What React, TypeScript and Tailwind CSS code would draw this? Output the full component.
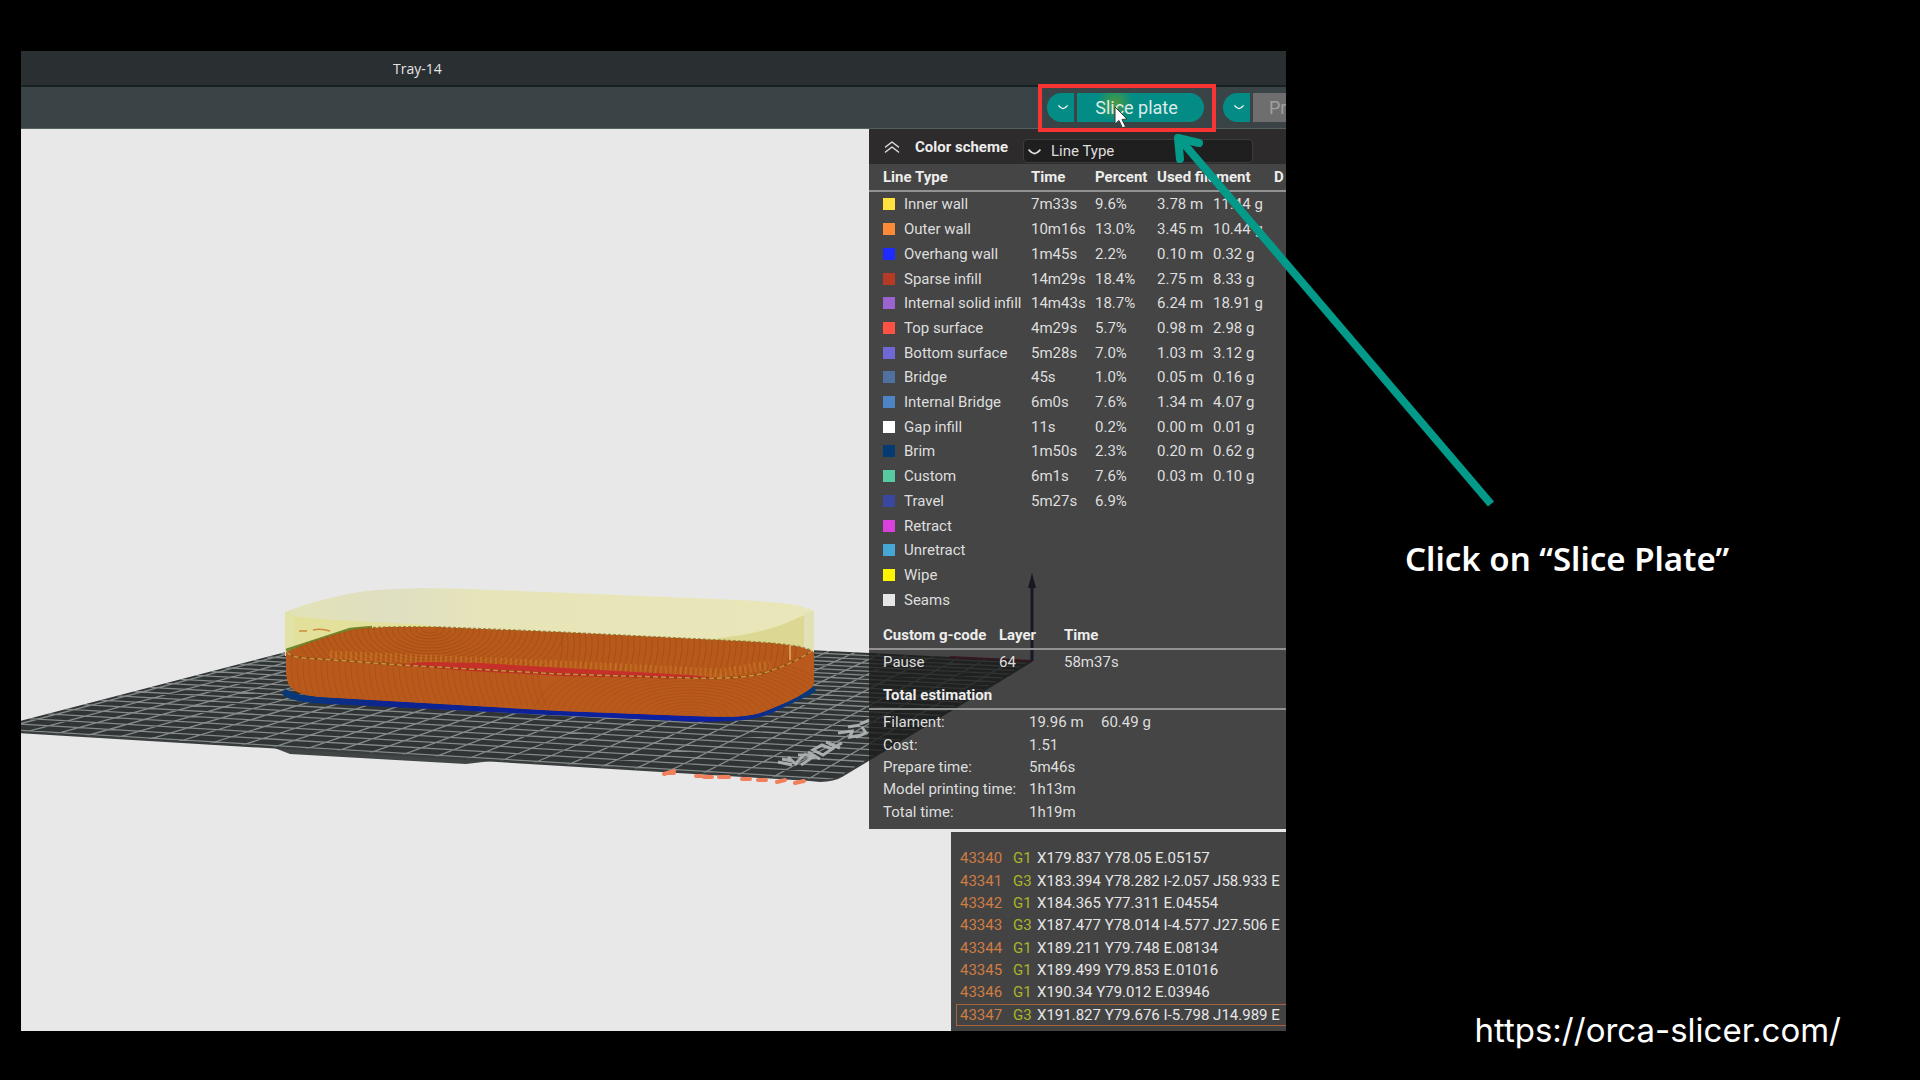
import React from "react";

type LineRow = [color: string, name: string, time?: string, percent?: string, meters?: string, grams?: string];

const lineTypes: LineRow[] = [
  ["#fee23e", "Inner wall", "7m33s", "9.6%", "3.78 m", "11.44 g"],
  ["#fc8a36", "Outer wall", "10m16s", "13.0%", "3.45 m", "10.44 g"],
  ["#1d2bff", "Overhang wall", "1m45s", "2.2%", "0.10 m", "0.32 g"],
  ["#b63a26", "Sparse infill", "14m29s", "18.4%", "2.75 m", "8.33 g"],
  ["#9a63d0", "Internal solid infill", "14m43s", "18.7%", "6.24 m", "18.91 g"],
  ["#ff5242", "Top surface", "4m29s", "5.7%", "0.98 m", "2.98 g"],
  ["#7068d4", "Bottom surface", "5m28s", "7.0%", "1.03 m", "3.12 g"],
  ["#5070a0", "Bridge", "45s", "1.0%", "0.05 m", "0.16 g"],
  ["#4c84c6", "Internal Bridge", "6m0s", "7.6%", "1.34 m", "4.07 g"],
  ["#ffffff", "Gap infill", "11s", "0.2%", "0.00 m", "0.01 g"],
  ["#053a72", "Brim", "1m50s", "2.3%", "0.20 m", "0.62 g"],
  ["#58caa0", "Custom", "6m1s", "7.6%", "0.03 m", "0.10 g"],
  ["#3a479e", "Travel", "5m27s", "6.9%"],
  ["#d940dc", "Retract"],
  ["#46a6d6", "Unretract"],
  ["#fdf500", "Wipe"],
  ["#e6e6e6", "Seams"],
];

const totals: [string, string, string?][] = [
  ["Filament:", "19.96 m", "60.49 g"],
  ["Cost:", "1.51"],
  ["Prepare time:", "5m46s"],
  ["Model printing time:", "1h13m"],
  ["Total time:", "1h19m"],
];

const gcode: [string, string, string][] = [
  ["43340", "G1", "X179.837 Y78.05 E.05157"],
  ["43341", "G3", "X183.394 Y78.282 I-2.057 J58.933 E"],
  ["43342", "G1", "X184.365 Y77.311 E.04554"],
  ["43343", "G3", "X187.477 Y78.014 I-4.577 J27.506 E"],
  ["43344", "G1", "X189.211 Y79.748 E.08134"],
  ["43345", "G1", "X189.499 Y79.853 E.01016"],
  ["43346", "G1", "X190.34 Y79.012 E.03946"],
  ["43347", "G3", "X191.827 Y79.676 I-5.798 J14.989 E"],
];

type Pt = [number, number];
const bed: Pt[] = [[-15, 730], [832, 781], [1032, 661], [375, 629]];

// Maps a point of the unit square onto the bed's perspective quad.
function project(u: number, v: number): string {
  const [p0, p1, p2, p3] = bed;
  const dx1 = p1[0] - p2[0], dx2 = p3[0] - p2[0], dx3 = p0[0] - p1[0] + p2[0] - p3[0];
  const dy1 = p1[1] - p2[1], dy2 = p3[1] - p2[1], dy3 = p0[1] - p1[1] + p2[1] - p3[1];
  const det = dx1 * dy2 - dx2 * dy1;
  const g = (dx3 * dy2 - dx2 * dy3) / det;
  const h = (dx1 * dy3 - dx3 * dy1) / det;
  const w = g * u + h * v + 1;
  const x = ((p1[0] - p0[0] + g * p1[0]) * u + (p3[0] - p0[0] + h * p3[0]) * v + p0[0]) / w;
  const y = ((p1[1] - p0[1] + g * p1[1]) * u + (p3[1] - p0[1] + h * p3[1]) * v + p0[1]) / w;
  return `${x.toFixed(1)} ${y.toFixed(1)}`;
}

const steps = Array.from({ length: 26 }, (_, i) => (i + 0.3) / 26);
const gridPath = steps
  .map((t) => `M${project(t, 0)}L${project(t, 1)}M${project(0, t)}L${project(1, t)}`)
  .join("");

const trayBody =
  "M286 652 C300 645 340 632 355 629 C380 626 420 627 440 627 L560 632 L740 641 C780 643 805 646 814 652 L814 684 C812 692 775 708 760 713 C745 718 715 717 690 716 L560 711 L320 697 C298 695 286 690 286 672 Z";
const trayRim =
  "M287 652 C290 657 300 658 320 659 L400 665 L560 674 L690 678 C730 679 755 677 770 671 C785 666 800 659 812 651";

function Scene() {
  return (
    <svg className="absolute inset-0 size-full" viewBox="21 129 1265 902" preserveAspectRatio="xMinYMin slice" aria-hidden="true">
      <defs>
        <clipPath id="bedClip">
          <path d="M-15 730 L375 629 L1032 661 L842 776 Q834 781 820 781 L810 780 Z" />
        </clipPath>
        <clipPath id="trayClip">
          <path d={trayBody} />
        </clipPath>
        <clipPath id="faceClip">
          <path d={`${trayRim} L814 652 L814 720 L286 720 Z`} />
        </clipPath>
        <linearGradient id="shellFill" x1="0" x2="1">
          <stop offset="0" stopColor="#e3e2b6" />
          <stop offset="0.2" stopColor="#dfdfc2" />
          <stop offset="0.4" stopColor="#e7e5b8" />
          <stop offset="1" stopColor="#e9e7ba" />
        </linearGradient>
        <linearGradient id="brimFill" x1="0" x2="1">
          <stop offset="0" stopColor="#093a78" />
          <stop offset="0.2" stopColor="#0d2390" />
          <stop offset="0.8" stopColor="#0d1fa2" />
          <stop offset="1" stopColor="#093a78" />
        </linearGradient>
      </defs>

      <path d="M272 747 L290 754 L466 764 L500 760 Z" fill="#414545" />
      <g clipPath="url(#bedClip)">
        <path d="M-20 600 H1040 V800 H-20 Z" fill="#303434" />
        <path d={gridPath} stroke="#858b8a" strokeWidth="1.3" fill="none" />
        <g fill="none" stroke="#b4b8b8" strokeWidth="3" opacity="0.9">
          <path d="M778 762 l14 3 M782 759 l10 2 M788 757 l9 8 M796 763 l8 -8 l-6 0 M801 765 l12 -8 M804 754 l11 4" />
          <path d="M808 752 l12 7 M813 750 l10 5 l9 -6 l-10 -4 z M826 742 l14 6 M832 748 l10 -5" />
          <path d="M838 733 l14 -2 l-2 6 l12 -2 M848 727 l12 -2 M856 737 l10 -4 l-4 -6 M860 724 l10 -4" />
        </g>
      </g>
      <path d="M-15 730 L810 780 L820 781 Q834 781 842 776 L1032 661" stroke="#3a3e3e" strokeWidth="2" fill="none" />
      <path d="M664 774l10 -3M669 773h5M696 776h5M704 777h8M719 777h10M742 779h8M758 780h8M777 782l8 -2M795 783l9 -2" stroke="#f0805c" strokeWidth="4" strokeLinecap="round" />

      <path d="M1032 661 L950 657" stroke="#a00030" strokeWidth="2" />
      <path d="M1032 661 V584" stroke="#120a58" strokeWidth="3" />
      <path d="M1032 573 L1036 588 H1028 Z" fill="#0a0640" />

      <path d="M285 612 C310 602 345 593 375 590 C410 588 440 588 470 589 L740 600 C785 602 808 606 814 612 V656 H285 Z" fill="url(#shellFill)" />
      <path d="M294 616 C330 622 420 622 440 627 L350 640 L286 652 V612 Z" fill="#e3e09c" />
      <path d="M285 612 L294 615 V650 L285 652 Z" fill="#e0e2a6" />
      <path d="M814 612 C795 617 780 630 735 636 L705 640 L814 652 Z" fill="#dcd894" />
      <path d="M804 613 L814 611 V652 H804 Z" fill="#e2e1b6" />
      <path d="M299 631h8M313 630q8 -2 17 1" stroke="#d08a3c" strokeWidth="1.5" fill="none" />
      <path d="M286 650 L350 629 L372 627" stroke="#6f8a2c" strokeWidth="2.5" fill="none" />

      <path d="M286 693 C296 700 320 700 340 701 L560 712 L690 718 C730 719 752 717 768 711 L812 690" stroke="url(#brimFill)" strokeWidth="7" strokeLinecap="round" fill="none" />

      <g clipPath="url(#trayClip)">
        <path d={trayBody} fill="#b85a1d" />
        <g fill="none" stroke="#8f420f" strokeWidth="1" opacity="0.45">
          {Array.from({ length: 22 }, (_, i) => (
            <ellipse key={i} cx="430" cy="629" rx={8 + i * 6} ry={4 + i * 3} />
          ))}
          {Array.from({ length: 40 }, (_, i) => (
            <path key={i} d={`M${560 + i * 6} 628 q6 20 -4 46`} />
          ))}
        </g>
        <path d="M330 655 L400 658 L560 665 L720 673 L770 665" stroke="#d0892c" strokeWidth="9" strokeDasharray="2 3" fill="none" opacity="0.45" />
        <path d="M396 665 L425 662 L480 663 L600 670 L690 675 L718 678 L690 679 L560 675 L470 670 Z" fill="#c6302a" />
        <g clipPath="url(#faceClip)">
          <path d={`${trayRim} L814 720 H286 Z`} fill="#bb5a1d" />
          <g fill="none" stroke="#96460f" strokeWidth="1" opacity="0.35">
            {Array.from({ length: 22 }, (_, i) => (
              <ellipse key={i} cx="690" cy="717" rx={10 + i * 7} ry={3 + i * 3} />
            ))}
            {Array.from({ length: 42 }, (_, i) => (
              <path key={i} d={`M${292 + i * 6} 656 q-4 20 8 50`} />
            ))}
          </g>
        </g>
        <path d="M396 665 L425 663 L480 665 L600 673 L700 677 L690 679 L560 676 L470 671 Z" fill="#c6302a" />
        <path d={trayRim} stroke="#6d4212" strokeWidth="2" fill="none" opacity="0.5" />
        <path d={trayRim} stroke="#d9a446" strokeWidth="1.5" strokeDasharray="5 3" fill="none" opacity="0.8" />
      </g>
      <path d="M287 652 C300 645 340 632 355 629 C380 626 420 627 440 627 L560 632 L740 641 C780 643 805 646 812 651" stroke="#8a6a20" strokeWidth="1.5" strokeDasharray="3 2" fill="none" opacity="0.7" />
      <path d="M790 644 V660" stroke="#e0b070" strokeWidth="1.5" />
    </svg>
  );
}

function Chevron({ className }: { className: string }) {
  return (
    <svg className={className} viewBox="0 0 12 6" fill="none" stroke="currentColor" strokeWidth="1.6" strokeLinecap="round" strokeLinejoin="round" aria-hidden="true">
      <path d="M1 1 Q3.5 4 6 4.3 Q8.5 4 11 1" />
    </svg>
  );
}

function Toolbar() {
  return (
    <div className="relative z-10 flex h-[42px] items-center justify-end border-b border-[#566063] bg-[#3a4446]">
      <div className="relative flex h-[29px] gap-[3px]">
        <button aria-label="Slice options" className="flex w-[27px] items-center justify-center rounded-l-full bg-[#038c85] pl-1 text-white">
          <Chevron className="w-[10px]" />
        </button>
        <button className="w-[127px] rounded-r-full bg-[#038c85] bg-[radial-gradient(circle_at_38px_10px,#4f9a3c_0,#038c85_18px)] pr-2 text-center text-[18px] text-[#dcebe9]">
          Slice plate
        </button>
        <span className="absolute -top-[9px] -right-[12px] -bottom-[10px] -left-[9px] border-4 border-[#f83434]" />
        <svg className="absolute top-[13px] left-[66px] h-[24px] w-[16px]" viewBox="0 0 16 24" aria-hidden="true">
          <path d="M2 1 L2 18 L6 14.5 L9.5 22 L12.5 20.5 L9 13.500 L14 13 Z" fill="#fff" stroke="#333b3b" strokeWidth="1" />
        </svg>
      </div>
      <div className="ml-[19px] flex h-[29px] w-[63px] gap-[3px]">
        <button aria-label="Print options" className="flex w-[27px] shrink-0 items-center justify-center rounded-l-full bg-[#038c85] pl-1 text-white">
          <Chevron className="w-[10px]" />
        </button>
        <button className="grow bg-[#6e6e6e] pl-[16px] text-left text-[18px] text-[#a0a0a0]">Pr</button>
      </div>
    </div>
  );
}

function PreviewPanel() {
  return (
    <section className="relative ml-auto w-[417px] overflow-hidden bg-[#1b1b1b]/80 pb-[6px] text-[15px] leading-5 text-[#dedede]">
      <div className="flex h-[35px] items-center bg-[#2d2b2c] pl-[15px]">
        <button aria-label="Collapse" className="mr-[15px] text-[#dedede]">
          <svg className="size-4" viewBox="0 0 16 16" fill="none" stroke="currentColor" strokeWidth="1.5" strokeLinecap="round" strokeLinejoin="round">
            <path d="M1.500 8 L8 3 L14.500 8 M1.500 13 L8 8 L14.500 13" />
          </svg>
        </button>
        <label htmlFor="scheme" className="w-[108px] shrink-0 font-bold text-[#ededed]">
          Color scheme
        </label>
        <div className="relative mt-2 w-[230px]">
          <select id="scheme" className="h-[24px] w-full appearance-none rounded-sm border border-[#3d3b3c] bg-[#201f20] pl-[27px] text-[15px] leading-5 text-[#dedede]">
            <option>Line Type</option>
          </select>
          <Chevron className="pointer-events-none absolute top-[10px] left-[5px] w-[13px]" />
        </div>
      </div>

      <table className="h-[448px] w-full table-fixed border-collapse text-left">
        <colgroup>
          <col className="w-[162px]" />
          <col className="w-[64px]" />
          <col className="w-[62px]" />
          <col className="w-[56px]" />
          <col className="w-[61px]" />
          <col />
        </colgroup>
        <thead>
          <tr className="h-[27px] border-b-2 border-[#929292] font-bold whitespace-nowrap text-[#ededed]">
            <th className="pl-[14px]">Line Type</th>
            <th>Time</th>
            <th>Percent</th>
            <th colSpan={2}>Used filament</th>
            <th>D</th>
          </tr>
        </thead>
        <tbody>
          {lineTypes.map(([color, name, time, percent, meters, grams]) => (
            <tr key={name} className="whitespace-nowrap">
              <td className="pl-[14px]">
                <span className="flex items-center gap-[9px]">
                  <span className="size-3" style={{ backgroundColor: color }} />
                  {name}
                </span>
              </td>
              <td>{time}</td>
              <td>{percent}</td>
              <td>{meters}</td>
              <td>{grams}</td>
              <td />
            </tr>
          ))}
        </tbody>
      </table>

      <table className="mt-[9px] w-full table-fixed border-collapse text-left">
        <colgroup>
          <col className="w-[130px]" />
          <col className="w-[65px]" />
          <col />
        </colgroup>
        <thead>
          <tr className="h-[28px] border-b-2 border-[#929292] font-bold whitespace-nowrap text-[#ededed]">
            <th className="pl-[14px]">Custom g-code</th>
            <th>Layer</th>
            <th>Time</th>
          </tr>
        </thead>
        <tbody>
          <tr className="h-[25px]">
            <td className="pl-[14px]">Pause</td>
            <td>64</td>
            <td>58m37s</td>
          </tr>
        </tbody>
      </table>

      <h2 className="mt-2 flex h-[28px] items-center border-b-2 border-[#929292] pl-[14px] font-bold text-[#ededed]">
        Total estimation
      </h2>
      <table className="mt-[1px] h-[112px] w-full table-fixed border-collapse text-left">
        <colgroup>
          <col className="w-[160px]" />
          <col className="w-[72px]" />
          <col />
        </colgroup>
        <tbody>
          {totals.map(([label, value, extra]) => (
            <tr key={label} className="whitespace-nowrap">
              <th scope="row" className="pl-[14px] font-normal">
                {label}
              </th>
              <td>{value}</td>
              <td>{extra}</td>
            </tr>
          ))}
        </tbody>
      </table>
    </section>
  );
}

function GcodePanel() {
  return (
    <section className="relative mt-[3px] ml-auto w-[335px] overflow-hidden bg-[#434344] pt-[15px] text-[15px] leading-5">
      <ol className="grid h-[179px] auto-rows-fr pl-[5px] whitespace-nowrap">
        {gcode.map(([num, cmd, args]) => (
          <li
            key={num}
            className="flex items-center border border-r-0 border-transparent pl-[3px] last:border-[#a8633a]"
          >
            <span className="w-[53px] text-[#d07c42]">{num}</span>
            <span className="w-6 text-[#a9b52a]">{cmd}</span>
            <span className="text-[#e6e6e6]">{args}</span>
          </li>
        ))}
      </ol>
      <div className="h-[5px]" />
    </section>
  );
}

export default function App() {
  return (
    <main className="relative grid min-h-screen grid-cols-[1265fr_634fr] bg-black pl-[21px] font-['Roboto',sans-serif]">
      <div className="mt-[51px] self-start overflow-hidden">
        <header className="flex h-[36px] items-center border-b-2 border-[#172023] bg-[#2a2f32] pl-[372px]">
          <h1 className="font-['Open_Sans',sans-serif] text-[14px] text-[#e4e4e4]">Tray-14</h1>
        </header>
        <Toolbar />
        <div className="relative overflow-hidden bg-[#e8e8e8]">
          <Scene />
          <PreviewPanel />
          <GcodePanel />
        </div>
      </div>

      <aside className="flex flex-col justify-between pt-[539px] pb-[30px] pl-[119px] text-white">
        <p className="font-['Noto_Sans',sans-serif] text-[33px] leading-10 font-semibold whitespace-nowrap">Click on “Slice Plate”</p>
        <a href="https://orca-slicer.com/" className="mr-[79px] self-end font-['Inter',sans-serif] text-[33px] leading-10 whitespace-nowrap">
          https://orca-slicer.com/
        </a>
      </aside>

      <svg className="pointer-events-none absolute inset-0 z-20 size-full" viewBox="0 0 1920 1080" preserveAspectRatio="xMinYMin meet" fill="none" stroke="#049a8a" strokeWidth="8" aria-hidden="true">
        <path d="M1491 504 L1179 138" />
        <path d="M1199 143 L1178 138 L1180 159" strokeLinecap="round" strokeLinejoin="round" />
      </svg>
    </main>
  );
}
